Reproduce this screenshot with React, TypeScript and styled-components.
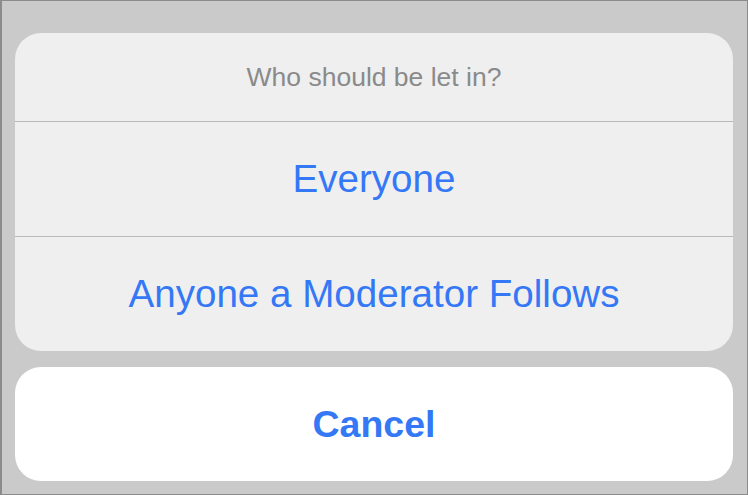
import React from 'react';
import styled, { createGlobalStyle } from 'styled-components';

const GlobalStyle = createGlobalStyle`
	html, body {
		margin: 0;
		padding: 0;
		background: #cacaca;
	}
	* {
		box-sizing: border-box;
	}
`;

const Screen = styled.div`
	width: 748px;
	height: 495px;
	background-color: #cacaca;
	border-style: solid;
	border-color: #8b8b8b;
	border-width: 1px 1px 1px 2px;
	padding: 32px 14px 13px 13px;
	display: flex;
	flex-direction: column;
	gap: 16px;
	font-family: 'Liberation Sans', Arial, sans-serif;
`;

const Group = styled.div`
	background-color: #efefef;
	border-radius: 26px;
	overflow: hidden;
	display: flex;
	flex-direction: column;
`;

const Title = styled.div`
	height: 89px;
	flex-shrink: 0;
	display: flex;
	align-items: center;
	justify-content: center;
	color: #8a8a8a;
	font-size: 26.5px;
	border-bottom: 1px solid #b9b9b9;
`;

const Action = styled.button<{ $bold?: boolean; $divider?: boolean }>`
	height: ${(p) => (p.$divider ? '115px' : '114px')};
	flex-shrink: 0;
	width: 100%;
	display: flex;
	align-items: center;
	justify-content: center;
	border: none;
	border-bottom: ${(p) => (p.$divider ? '1px solid #b9b9b9' : 'none')};
	background: transparent;
	color: #3478f6;
	font-family: inherit;
	font-size: ${(p) => (p.$bold ? '37.5px' : '38.6px')};
	font-weight: ${(p) => (p.$bold ? 700 : 400)};
	padding: 0;
	cursor: pointer;
`;

const CancelCard = styled.div`
	background-color: #ffffff;
	border-radius: 26px;
	overflow: hidden;
	flex-shrink: 0;
`;

const options = ['Everyone', 'Anyone a Moderator Follows'];

const App = (): JSX.Element => {
	return (
		<>
			<GlobalStyle />
			<Screen>
				<Group>
					<Title>Who should be let in?</Title>
					{options.map((option, i) => (
						<Action key={option} $divider={i < options.length - 1}>
							{option}
						</Action>
					))}
				</Group>
				<CancelCard>
					<Action $bold>Cancel</Action>
				</CancelCard>
			</Screen>
		</>
	);
};

export default App;
